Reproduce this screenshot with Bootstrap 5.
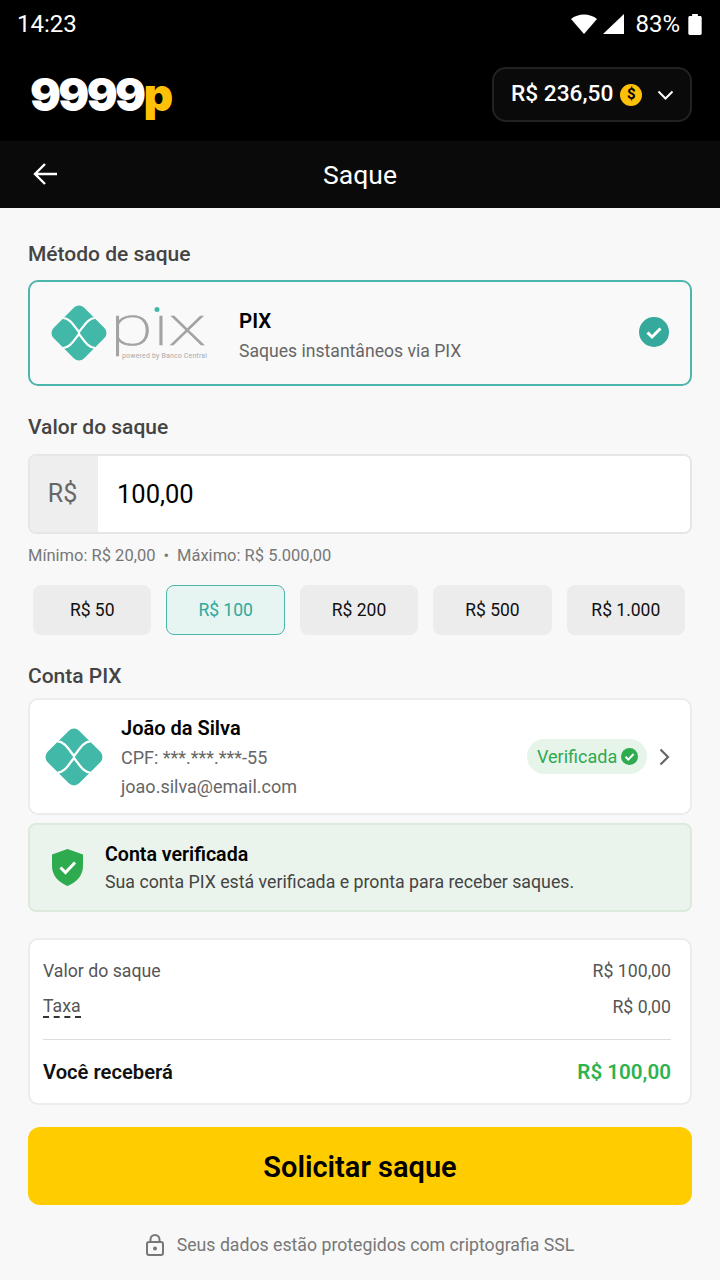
<!DOCTYPE html>
<html lang="pt-BR">

<head>
    <meta charset="UTF-8">
    <meta name="viewport" content="width=device-width, initial-scale=1.0">
    <title>Saque</title>
    <link href="https://cdn.jsdelivr.net/npm/bootstrap@5.3.0/dist/css/bootstrap.min.css" rel="stylesheet">
    <style>
        body { font-family: Roboto, "Liberation Sans", sans-serif; background: #f8f8f8; color: #000; width: 720px; height: 1280px; overflow: hidden; }
        .status-bar { height: 47px; background: #000; color: #fff; padding: 1px 18px 0 17px; font-size: 24px; }
        .wifi-ico { margin-right: 6px; }
        .signal-ico { margin-right: 11px; }
        .batt-ico { margin-left: 8px; }
        .top-bar { height: 94px; background: #000; padding: 0 28px 0 30px; }
        .brand { font-family: Inter, Roboto, sans-serif; font-weight: 900; font-size: 46px; letter-spacing: -2.700px; color: #fff; line-height: 1; }
        .brand span { color: #ffc107; }
        .balance { width: 200px; height: 55px; background: #0a0a0a; border: 2px solid #222; border-radius: 14px; color: #fff; font-size: 22.700px; font-weight: 500; padding: 1px 0 0 17px; }
        .coin { width: 22px; height: 22px; border-radius: 50%; background: #ffc107; color: #000; font-size: 15px; font-weight: 700; margin-left: 7px; margin-right: 15px; }
        .title-bar { height: 67px; background: #0a0a0a; color: #fff; font-size: 26.500px; }
        .back-btn { left: 33px; top: 21px; }
        .page { padding: 0 28px; }
        .sec-label { font-size: 21px; font-weight: 500; color: #444; line-height: 24px; }
        .method-box { height: 106px; margin-top: 14px; background: #f9f9f9; border: 2px solid #4db6ac; border-radius: 10px; padding: 0 21px; }
        .pix-word { width: 102px; height: 80px; margin-left: 2px; }
        .method-text { margin-left: 28px; margin-top: 4px; }
        .method-name { font-size: 20.500px; font-weight: 600; line-height: 26px; }
        .method-sub { font-size: 17.600px; color: #666; line-height: 24px; margin-top: 5px; }
        .method-check { margin-bottom: 3px; }
        .amount-box { height: 80px; margin-top: 15px; border: 2px solid #e6e6e6; border-radius: 8px; overflow: hidden; background: #fff; }
        .amount-box .input-group-text { width: 69px; background: #eee; border: 0; border-radius: 0; color: #666; font-size: 25px; justify-content: center; padding: 0 4px 0 0; }
        .amount-box .form-control { border: 0; font-size: 25.500px; color: #000; padding: 1px 0 0 19px; box-shadow: none; background: #fff; }
        .limits { font-size: 16.500px; color: #777; line-height: 20px; margin-top: 12px; }
        .limits i { font-style: normal; margin: 0 8px; }
        .chips { padding: 0 7px 0 5px; margin-top: 19px; gap: 15px; }
        .chip { flex: 1 1 0; height: 50px; padding: 0; background: #ececec; border: 1px solid #ececec; border-radius: 8px; font-size: 17.500px; color: #111; }
        .chip.sel, .chip.sel:hover { background: #e6f4f2; border-color: #4db6ac; color: #2ea99b; }
        .acct-box { height: 117px; margin-top: 10px; background: #fff; border: 2px solid #ececec; border-radius: 10px; padding: 0 20px 0 15px; }
        .acct-text { margin-left: 18px; padding-top: 2px; }
        .acct-name { font-size: 20px; font-weight: 600; line-height: 30px; margin-top: -1px; }
        .acct-line { font-size: 18px; color: #666; line-height: 29px; }
        .verified { height: 35px; width: 120px; background: #e6f4ea; color: #2eaa4f; border-radius: 18px; font-size: 18px; padding-left: 10px; }
        .acct-arrow { margin-left: 12px; }
        .ok-box { height: 89px; margin-top: 8px; background: #ebf4ec; border: 2px solid #dce9dd; border-radius: 8px; padding-left: 22px; }
        .ok-text { margin-left: 22px; }
        .ok-title { font-size: 19.600px; font-weight: 600; line-height: 28px; }
        .ok-sub { font-size: 17.750px; color: #444; line-height: 26px; }
        .sum-box { height: 167px; margin-top: 26px; background: #fff; border: 2px solid #ececec; border-radius: 10px; padding: 13px 19px 0 13px; font-size: 17.700px; color: #555; }
        .sum-row { height: 36px; }
        .taxa { border-bottom: 2px dashed #333; line-height: 20px; }
        .sum-line { margin: 14px 0; border: 0; border-top: 1px solid #ddd; opacity: 1; }
        .sum-total { font-size: 20.200px; font-weight: 600; color: #111; height: 36px; }
        .sum-total b { font-size: 20.600px; font-weight: 600; color: #2eb34f; }
        .main-btn { width: 100%; height: 78px; margin-top: 22px; padding: 10px 0 6px; background: #ffcc00; border: 0; border-radius: 12px; font-size: 29px; font-weight: 600; color: #000; }
        .main-btn:hover { background: #ffcc00; color: #000; }
        .foot-note { font-size: 17.700px; color: #777; margin-top: 28px; line-height: 24px; gap: 13px; }
    </style>
</head>

<body>
    <svg width="0" height="0" class="position-absolute">
        <defs>
            <symbol id="pixmark" viewBox="0 0 56 56">
                <rect x="6.500" y="6.500" width="43" height="43" rx="7" transform="rotate(45 28 28)" fill="#41b8a8" />
                <path d="M12 13C19 13 23 21 28 27C33 21 37 13 44 13M12 43C19 43 23 35 28 29C33 35 37 43 44 43M28 27V29" fill="none" stroke="#fff" stroke-width="2.200" />
            </symbol>
        </defs>
    </svg>

    <div class="status-bar d-flex align-items-center justify-content-between">
        <span>14:23</span>
        <div class="d-flex align-items-center">
            <svg class="wifi-ico" width="26" height="20" viewBox="0 0 26 20">
                <path d="M0 5C7 -1 19 -1 26 5L13 20Z" fill="#fff" />
            </svg>
            <svg class="signal-ico" width="21" height="20" viewBox="0 0 21 20">
                <path d="M21 0V20H0Z" fill="#fff" />
            </svg>
            <span>83%</span>
            <svg class="batt-ico" width="14" height="21" viewBox="0 0 14 22">
                <path d="M4 0H10V2H12.500C13.300 2 14 2.700 14 3.500V20.500C14 21.300 13.300 22 12.500 22H1.500C.7 22 0 21.300 0 20.500V3.500C0 2.700 .7 2 1.500 2H4Z" fill="#fff" />
            </svg>
        </div>
    </div>

    <div class="top-bar d-flex align-items-center justify-content-between">
        <div class="brand">9999<span>p</span></div>
        <div class="balance d-flex align-items-center">
            <span>R$ 236,50</span>
            <span class="coin d-flex align-items-center justify-content-center">$</span>
            <svg width="17" height="10" viewBox="0 0 17 10">
                <path d="M1.500 1.500L8.500 8.500L15.500 1.500" fill="none" stroke="#fff" stroke-width="2" />
            </svg>
        </div>
    </div>

    <div class="title-bar position-relative d-flex align-items-center justify-content-center">
        <svg class="back-btn position-absolute" width="25" height="24" viewBox="0 0 25 24">
            <path d="M24 12H2M12 2L2 12L12 22" fill="none" stroke="#fff" stroke-width="2.400" />
        </svg>
        <span>Saque</span>
    </div>

    <div class="page">
        <div class="sec-label" style="margin-top:34px">Método de saque</div>
        <div class="method-box d-flex align-items-center">
            <svg width="56" height="56"><use href="#pixmark" /></svg>
            <svg class="pix-word" viewBox="0 0 102 80">
                <text x="1" y="52" font-family="Roboto" font-weight="100" font-size="56" fill="#a3a3a3" stroke="#a3a3a3" stroke-width=".7" textLength="96" lengthAdjust="spacingAndGlyphs">pıx</text>
                <circle cx="48" cy="16.500" r="2.500" fill="#41b8a8" />
                <text x="13" y="65" font-family="Roboto" font-size="7" fill="#aaa" textLength="85">powered by Banco Central</text>
            </svg>
            <div class="method-text">
                <div class="method-name">PIX</div>
                <div class="method-sub">Saques instantâneos via PIX</div>
            </div>
            <svg class="method-check ms-auto" width="30" height="30" viewBox="0 0 30 30">
                <circle cx="15" cy="15" r="15" fill="#35a99b" />
                <path d="M8.500 15.500L13 20L21.500 11.500" fill="none" stroke="#fff" stroke-width="3" />
            </svg>
        </div>

        <div class="sec-label" style="margin-top:29px">Valor do saque</div>
        <div class="amount-box input-group flex-nowrap">
            <span class="input-group-text">R$</span>
            <input class="form-control" type="text" value="100,00">
        </div>
        <div class="limits">Mínimo: R$ 20,00<i>•</i>Máximo: R$ 5.000,00</div>
        <div class="chips d-flex">
            <button class="btn chip">R$ 50</button>
            <button class="btn chip sel">R$ 100</button>
            <button class="btn chip">R$ 200</button>
            <button class="btn chip">R$ 500</button>
            <button class="btn chip">R$ 1.000</button>
        </div>

        <div class="sec-label" style="margin-top:29px">Conta PIX</div>
        <div class="acct-box d-flex align-items-center">
            <svg width="58" height="58"><use href="#pixmark" /></svg>
            <div class="acct-text">
                <div class="acct-name">João da Silva</div>
                <div class="acct-line">CPF: ***.***.***-55</div>
                <div class="acct-line">joao.silva@email.com</div>
            </div>
            <div class="verified d-flex align-items-center ms-auto">
                <span>Verificada</span>
                <svg class="ms-1" width="17" height="17" viewBox="0 0 17 17">
                    <circle cx="8.500" cy="8.500" r="8.500" fill="#2eaa4f" />
                    <path d="M4.500 8.800L7.300 11.600L12.600 6" fill="none" stroke="#fff" stroke-width="2" />
                </svg>
            </div>
            <svg class="acct-arrow" width="11" height="18" viewBox="0 0 11 18">
                <path d="M1.500 1.500L9 9L1.500 16.500" fill="none" stroke="#666" stroke-width="2.200" />
            </svg>
        </div>

        <div class="ok-box d-flex align-items-center">
            <svg width="31" height="37" viewBox="0 0 31 37">
                <path d="M15.500 0L31 5.500V17C31 27 24 33.500 15.500 37C7 33.500 0 27 0 17V5.500Z" fill="#2eaa4f" />
                <path d="M8.500 18.500L13.500 23.500L23 13.500" fill="none" stroke="#fff" stroke-width="3" />
            </svg>
            <div class="ok-text">
                <div class="ok-title">Conta verificada</div>
                <div class="ok-sub">Sua conta PIX está verificada e pronta para receber saques.</div>
            </div>
        </div>

        <div class="sum-box">
            <div class="sum-row d-flex align-items-center justify-content-between">
                <span>Valor do saque</span><span>R$ 100,00</span>
            </div>
            <div class="sum-row d-flex align-items-center justify-content-between">
                <span class="taxa">Taxa</span><span>R$ 0,00</span>
            </div>
            <hr class="sum-line">
            <div class="sum-total d-flex align-items-center justify-content-between">
                <span>Você receberá</span><b>R$ 100,00</b>
            </div>
        </div>

        <button class="btn main-btn">Solicitar saque</button>

        <div class="foot-note d-flex align-items-center justify-content-center">
            <svg width="18" height="22" viewBox="0 0 18 22">
                <rect x="1" y="8" width="16" height="13" rx="2" fill="none" stroke="#777" stroke-width="2" />
                <path d="M4.500 8V5.500C4.500 3 6.500 1 9 1S13.500 3 13.500 5.500V8" fill="none" stroke="#777" stroke-width="2" />
                <circle cx="9" cy="14.500" r="2" fill="#777" />
            </svg>
            <span>Seus dados estão protegidos com criptografia SSL</span>
        </div>
    </div>

    <script src="https://cdn.jsdelivr.net/npm/bootstrap@5.3.0/dist/js/bootstrap.bundle.min.js"></script>
</body>

</html>
